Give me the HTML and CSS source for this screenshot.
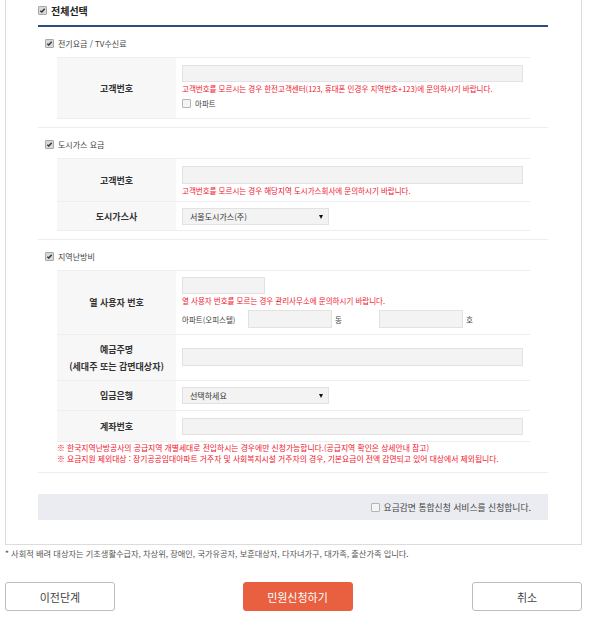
FILE: index.html
```html
<!DOCTYPE html>
<html lang="ko">
<head>
    <meta charset="UTF-8">
    <title>요금감면 신청</title>
    <link rel="stylesheet" href="styles.css">
</head>
<body>
    <div class="panel">
        <div class="all-check">
            <span class="cb on"><svg viewBox="0 0 8 8"><path d="M1.5 4.2 L3.2 5.8 L6.5 2" /></svg></span>
            <span>전체선택</span>
        </div>

        <div class="section">
            <div class="section-title">
                <span class="cb on"><svg viewBox="0 0 8 8"><path d="M1.5 4.2 L3.2 5.8 L6.5 2" /></svg></span>
                <span>전기요금 / TV수신료</span>
            </div>
            <table class="form-table">
                <tr>
                    <th>고객번호</th>
                    <td class="cell-a">
                        <div class="input"></div>
                        <p class="error">고객번호를 모르시는 경우 한전고객센터(123, 휴대폰 인경우 지역번호+123)에 문의하시기 바랍니다.</p>
                        <div class="check-line">
                            <span class="cb"></span>
                            <span>아파트</span>
                        </div>
                    </td>
                </tr>
            </table>
        </div>

        <div class="section">
            <div class="section-title">
                <span class="cb on"><svg viewBox="0 0 8 8"><path d="M1.5 4.2 L3.2 5.8 L6.5 2" /></svg></span>
                <span>도시가스 요금</span>
            </div>
            <table class="form-table">
                <tr>
                    <th>고객번호</th>
                    <td class="cell-b">
                        <div class="input input-tall"></div>
                        <p class="error">고객번호를 모르시는 경우 해당지역 도시가스회사에 문의하시기 바랍니다.</p>
                    </td>
                </tr>
                <tr>
                    <th>도시가스사</th>
                    <td class="cell-c">
                        <div class="select"><span>서울도시가스(주)</span><span class="arrow"></span></div>
                    </td>
                </tr>
            </table>
        </div>

        <div class="section">
            <div class="section-title">
                <span class="cb on"><svg viewBox="0 0 8 8"><path d="M1.5 4.2 L3.2 5.8 L6.5 2" /></svg></span>
                <span>지역난방비</span>
            </div>
            <table class="form-table">
                <tr>
                    <th>열 사용자 번호</th>
                    <td class="cell-d">
                        <div class="input input-short"></div>
                        <p class="error">열 사용자 번호를 모르는 경우 관리사무소에 문의하시기 바랍니다.</p>
                        <div class="apt-line">
                            <span class="apt-label">아파트(오피스텔)</span>
                            <div class="input input-apt"></div>
                            <span class="unit">동</span>
                            <div class="input input-apt"></div>
                            <span class="unit">호</span>
                        </div>
                    </td>
                </tr>
                <tr>
                    <th class="two-line">예금주명<br>(세대주 또는 감면대상자)</th>
                    <td class="cell-e">
                        <div class="input input-tall"></div>
                    </td>
                </tr>
                <tr>
                    <th>입금은행</th>
                    <td class="cell-f">
                        <div class="select"><span>선택하세요</span><span class="arrow"></span></div>
                    </td>
                </tr>
                <tr>
                    <th>계좌번호</th>
                    <td class="cell-g">
                        <div class="input"></div>
                    </td>
                </tr>
            </table>
            <div class="notes">
                <p>※ 한국지역난방공사의 공급지역 개별세대로 전입하시는 경우에만 신청가능합니다.(공급지역 확인은 상세안내 참고)</p>
                <p>※ 요금지원 제외대상 : 장기공공임대아파트 거주자 및 사회복지시설 거주자의 경우, 기본요금이 전액 감면되고 있어 대상에서 제외됩니다.</p>
            </div>
        </div>

        <div class="agree-box">
            <span class="cb"></span>
            <span>요금감면 통합신청 서비스를 신청합니다.</span>
        </div>
    </div>

    <p class="footnote">* 사회적 배려 대상자는 기초생활수급자, 차상위, 장애인, 국가유공자, 보훈대상자, 다자녀가구, 대가족, 출산가족 입니다.</p>

    <div class="buttons">
        <button class="btn">이전단계</button>
        <button class="btn btn-primary">민원신청하기</button>
        <button class="btn">취소</button>
    </div>
</body>
</html>
```

FILE: styles.css
```css
body {
    margin: 0;
    padding: 0 8px 0 5px;
    font-family: "Noto Sans CJK KR", "Noto Sans", sans-serif;
    color: #333;
    background: #fff;
}
p {
    margin: 0;
}
.panel {
    border: 1px solid #dcdcdc;
    border-top: none;
    padding: 0 33px 24px 32px;
}

/* checkbox */
.cb {
    display: inline-flex;
    width: 7px;
    height: 7px;
    border: 1px solid #b5b5b5;
    border-radius: 1px;
    background: #f4f4f4;
    flex-shrink: 0;
}
.cb.on {
    background: #d9d9d9;
    border-color: #a8a8a8;
}
.cb svg {
    width: 7px;
    height: 7px;
    fill: none;
    stroke: #333;
    stroke-width: 1.6;
}

.all-check {
    display: flex;
    align-items: center;
    gap: 4px;
    height: 20px;
    padding-bottom: 5px;
    border-bottom: 2px solid #2f4c7e;
    font-size: 10px;
    font-weight: bold;
    color: #222;
}

.section {
    border-bottom: 1px solid #eeeeee;
    padding-bottom: 8px;
}
.section-title {
    display: flex;
    align-items: center;
    gap: 4px;
    height: 12px;
    margin: 10px 0 8px;
    padding-left: 7px;
    font-size: 8px;
    color: #444;
}
.form-table {
    margin-left: 19px;
    width: 473px;
    border-collapse: collapse;
}
.form-table th,
.form-table td {
    border-top: 1px solid #eeeeee;
    border-bottom: 1px solid #eeeeee;
}
.form-table th {
    width: 119px;
    background: #f7f7f7;
    font-size: 9px;
    font-weight: bold;
    color: #333;
    text-align: center;
    vertical-align: middle;
    padding: 0;
}
.form-table th.two-line {
    line-height: 17px;
}
.form-table td {
    padding: 0 7px 0 6px;
    vertical-align: middle;
}
.cell-a { padding-top: 7px !important; padding-bottom: 9px !important; }
.cell-b { padding-top: 7px !important; padding-bottom: 4px !important; }
.cell-c { padding-top: 6px !important; padding-bottom: 5px !important; }
.cell-d { padding-top: 6px !important; padding-bottom: 6px !important; }
.cell-e { padding-top: 13px !important; padding-bottom: 14px !important; }
.cell-f { padding-top: 6px !important; padding-bottom: 6px !important; }
.cell-g { padding-top: 7px !important; padding-bottom: 6px !important; }

.input {
    height: 17px;
    box-sizing: border-box;
    border: 1px solid #e2e2e2;
    background: #f3f3f3;
}
.input-tall {
    height: 18px;
}
.input-short {
    width: 83px;
}
.input-apt {
    width: 84px;
    height: 18px;
}
.error {
    margin-top: 1px;
    font-size: 7.5px;
    line-height: 12px;
    color: #f0142d;
    white-space: nowrap;
}
.check-line {
    display: flex;
    align-items: center;
    gap: 4px;
    margin-top: 2px;
    height: 12px;
    font-size: 7.5px;
    color: #444;
}
.apt-line {
    display: flex;
    align-items: center;
    margin-top: 3px;
    font-size: 7.5px;
    color: #444;
}
.apt-label {
    width: 66px;
}
.unit {
    width: 44px;
    padding-left: 3px;
}

.select {
    display: flex;
    align-items: center;
    justify-content: space-between;
    width: 147px;
    height: 17px;
    box-sizing: border-box;
    border: 1px solid #e2e2e2;
    background: #f3f3f3;
    padding: 0 5px 0 7px;
    font-size: 8px;
    color: #333;
}
.arrow {
    width: 0;
    height: 0;
    border-left: 2.5px solid transparent;
    border-right: 2.5px solid transparent;
    border-top: 4px solid #111;
}

.notes {
    margin-left: 19px;
    font-size: 7.8px;
    line-height: 11px;
    color: #f0142d;
    white-space: nowrap;
}

.agree-box {
    display: flex;
    align-items: center;
    justify-content: flex-end;
    gap: 4px;
    margin-top: 21px;
    height: 26px;
    padding-right: 17px;
    background: #ebecf1;
    font-size: 8.8px;
    color: #444;
}

.footnote {
    margin-top: 2px;
    font-size: 8.2px;
    line-height: 12px;
    color: #555;
    white-space: nowrap;
}

.buttons {
    display: flex;
    justify-content: space-between;
    margin-top: 23px;
}
.btn {
    width: 110px;
    height: 29px;
    border: 1px solid #bdbdbd;
    border-radius: 3px;
    background: #fff;
    font-family: inherit;
    font-size: 11px;
    color: #444;
    cursor: pointer;
}
.btn-primary {
    margin-left: 8px;
    border-color: #e8603f;
    background: #e8603f;
    color: #fff;
}
```
